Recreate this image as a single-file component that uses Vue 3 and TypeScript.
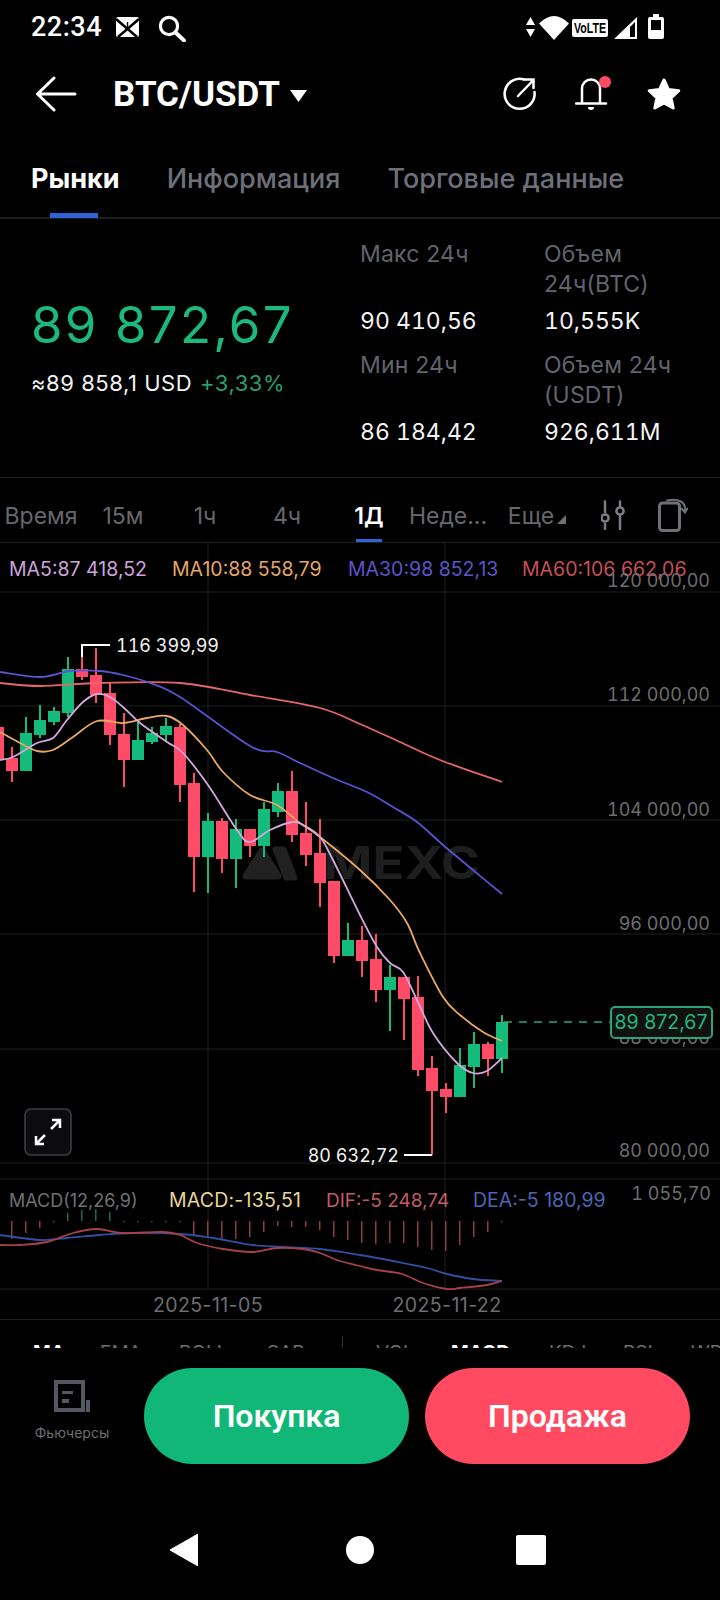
<template>
  <div class="screen">
    <div class="status-bar">
      <span class="clock">22:34</span>
      <svg class="st-tile" width="23" height="20" viewBox="0 0 23 20">
        <rect width="23" height="20" rx="2" fill="#fff" />
        <path d="M0 2 L21 20 M23 2 L2 20" stroke="#000" stroke-width="2.5" />
        <path d="M11.5 5v7m-3-3 3 3 3-3" stroke="#000" stroke-width="1.4" fill="none" />
      </svg>
      <svg class="st-search" width="28" height="27" viewBox="0 0 28 27">
        <circle cx="11" cy="11" r="8.6" fill="none" stroke="#fff" stroke-width="3.2" />
        <path d="M17.5 17.5 26 25.5" stroke="#fff" stroke-width="3.8" stroke-linecap="round" />
      </svg>
      <div class="st-right">
        <svg width="9" height="20" viewBox="0 0 9 20"><path d="M4.5 0 9 8H0ZM0 12h9l-4.500 8Z" fill="#fff" /></svg>
        <svg class="st-wifi" width="30" height="24" viewBox="0 0 30 24"><path d="M0 7.500Q15-7.500 30 7.500L15 24Z" fill="#fff" /></svg>
        <svg class="st-volte" width="36" height="18" viewBox="0 0 36 18">
          <rect width="36" height="18" rx="2" fill="#fff" />
          <text x="18" y="14" text-anchor="middle" textLength="32" lengthAdjust="spacingAndGlyphs" class="volte-text">VoLTE</text>
        </svg>
        <svg class="st-signal" width="23" height="22" viewBox="0 0 23 22">
          <path d="M23 0V22H0ZM21 5 16 10V20H21Z" fill="#fff" fill-rule="evenodd" />
        </svg>
        <svg class="st-battery" width="16" height="25" viewBox="0 0 16 25">
          <path d="M5 0h6v3h3a2 2 0 0 1 2 2v18a2 2 0 0 1-2 2H2a2 2 0 0 1-2-2V5a2 2 0 0 1 2-2h3Z" fill="#fff" />
          <rect x="3" y="6" width="10" height="10" fill="#000" />
        </svg>
      </div>
    </div>

    <header class="top-bar">
      <svg class="back" width="42" height="36" viewBox="0 0 42 36">
        <path d="M40 18H3M19 2 2.500 18 19 34" fill="none" stroke="#fff" stroke-width="3" stroke-linecap="round" stroke-linejoin="round" />
      </svg>
      <span class="pair">BTC/USDT</span>
      <svg class="caret" width="17" height="12" viewBox="0 0 17 12"><path d="M0 0H17L8.500 12Z" fill="#fff" /></svg>
      <div class="top-icons">
        <svg class="ic-share" width="34" height="34" viewBox="0 0 34 34">
          <path d="M21 2.500A15 15 0 1 0 31.500 15" fill="none" stroke="#fff" stroke-width="2.500" stroke-linecap="round" />
          <path d="M15 19 30 3.500M21.500 2.500H30.500V11" fill="none" stroke="#fff" stroke-width="2.500" stroke-linecap="round" />
        </svg>
        <svg class="ic-bell" width="36" height="36" viewBox="0 0 36 36">
          <path d="M7 27V12.500a9 9 0 0 1 18 0V27M1 27.500H31" fill="none" stroke="#fff" stroke-width="2.500" stroke-linecap="round" />
          <path d="M13 31h6a3 3 0 0 1-6 0Z" fill="#fff" />
          <circle cx="30" cy="6" r="6" fill="#ff4a62" />
        </svg>
        <svg class="ic-star" width="36" height="34" viewBox="0 0 36 34">
          <path d="M18 3 22.400 12.500 32.800 13.700 25.100 20.800 27.200 31 18 25.900 8.800 31 10.900 20.800 3.200 13.700 13.600 12.500Z" fill="#fff" stroke="#fff" stroke-width="3" stroke-linejoin="round" />
        </svg>
      </div>
    </header>

    <nav class="main-tabs">
      <span v-for="tab in mainTabs" :key="tab" class="main-tab" :class="{ active: tab === 'Рынки' }">{{ tab }}</span>
    </nav>

    <section class="stats">
      <div class="price-box">
        <div class="last-price">89 872,67</div>
        <div class="usd-price">≈89 858,1 USD <span class="change">+3,33%</span></div>
      </div>
      <div class="stats-grid">
        <div v-for="stat in stats" :key="stat.label" class="stat">
          <div class="stat-label">{{ stat.label }}</div>
          <div class="stat-value">{{ stat.value }}</div>
        </div>
      </div>
    </section>

    <div class="periods">
      <span v-for="p in periods" :key="p" class="period" :class="{ active: p === '1Д', week: p === 'Неде...' }">{{ p }}</span>
      <span class="period more">Еще<i class="more-mark"></i></span>
      <svg class="ic-sliders" width="24" height="30" viewBox="0 0 24 30">
        <g fill="none" stroke="#7b7c82" stroke-width="2.500" stroke-linecap="round">
          <path d="M4 1.500V12M4 24V29M19 1.500V7M19 16V29" />
          <circle cx="4" cy="18" r="3.600" />
          <circle cx="19" cy="11" r="3.600" />
        </g>
      </svg>
      <svg class="ic-rotate" width="30" height="34" viewBox="0 0 30 34">
        <rect x="1.500" y="5" width="20" height="27.500" rx="3" fill="none" stroke="#6f7075" stroke-width="3" />
        <path d="M9 2.500C20 .5 28 3 27 13M23.500 10.500 27 14.500 29.500 10.500" fill="none" stroke="#6f7075" stroke-width="2" stroke-linecap="round" />
      </svg>
    </div>

    <div class="chart-wrap">
      <svg class="chart" width="720" height="777" viewBox="0 543 720 777">
        <line v-for="y in gridRows" :key="y" x1="0" x2="720" :y1="y" :y2="y" class="grid" />
        <line v-for="x in [208, 445]" :key="x" :x1="x" :x2="x" y1="543" y2="1289" class="grid" />

        <!-- watermark -->
        <path d="M262 851 278 876H246Z" class="wm" stroke-width="7" stroke-linejoin="round" />
        <path d="M275 849H284L295 878H286Z" class="wm" stroke-width="5" stroke-linejoin="round" />
        <text x="323" y="879" textLength="157" lengthAdjust="spacingAndGlyphs" class="wm-text">MEXC</text>

        <g v-for="c in candles" :key="c[0]" :fill="c[5] === 'g' ? green : red">
          <rect :x="c[0] - 1" :y="c[3]" width="2" :height="c[4] - c[3]" />
          <rect :x="c[0] - 6" :y="c[1]" width="12" :height="c[2] - c[1]" />
        </g>

        <path :d="smooth(ma60)" class="ma" stroke="#e4666b" />
        <path :d="smooth(ma30)" class="ma" stroke="#5a52cf" />
        <path :d="smooth(ma10)" class="ma" stroke="#eaa862" />
        <path :d="smooth(ma5)" class="ma" stroke="#d5a8e0" />

        <text x="9" y="576" class="ma-lbl" fill="#cda4dc">MA5:87 418,52</text>
        <text x="172" y="576" class="ma-lbl" fill="#e5a765">MA10:88 558,79</text>
        <text x="348" y="576" class="ma-lbl" fill="#5c55c9">MA30:98 852,13</text>
        <text x="522" y="576" class="ma-lbl" fill="#c84f55">MA60:106 662,06</text>

        <text v-for="a in axis" :key="a.y" x="710" :y="a.y" text-anchor="end" class="lbl" fill="#6d6e70">{{ a.t }}</text>

        <path d="M82 657V645H110" fill="none" stroke="#fff" stroke-width="2" />
        <text x="116" y="652" class="lbl" fill="#f2f2f2">116 399,99</text>
        <path d="M404 1155H432" stroke="#fff" stroke-width="2" />
        <text x="399" y="1162" text-anchor="end" class="lbl" fill="#f2f2f2">80 632,72</text>

        <line x1="504" x2="610" y1="1022" y2="1022" stroke="#2aa57a" stroke-width="1.500" stroke-dasharray="8 7" />
        <rect x="611" y="1007" width="101" height="31" rx="4" fill="#111" stroke="#2aa57a" stroke-width="2" />
        <text x="661" y="1029" text-anchor="middle" class="ma-lbl" fill="#1fb87d">89 872,67</text>

        <text x="9" y="1207" class="macd-lbl" fill="#6f7073">MACD(12,26,9)</text>
        <text x="169" y="1207" class="ma-lbl wide" fill="#e9d59a">MACD:-135,51</text>
        <text x="326" y="1207" class="ma-lbl tight" fill="#c25a66">DIF:-5 248,74</text>
        <text x="473" y="1207" class="ma-lbl" fill="#4a66b4">DEA:-5 180,99</text>
        <text x="711" y="1200" text-anchor="end" class="lbl" fill="#6d6e70">1 055,70</text>

        <rect v-for="b in macdBars" :key="b[0]" :x="b[0] - 1" :y="b[1]" width="1.500" :height="b[2]" :fill="b[3]" />
        <path :d="smooth(dea)" class="macd-line" stroke="#2f4f9f" />
        <path :d="smooth(dif)" class="macd-line" stroke="#a8404a" />

        <text x="208" y="1312" text-anchor="middle" class="date-lbl" fill="#6d6e70">2025-11-05</text>
        <text x="447" y="1312" text-anchor="middle" class="date-lbl" fill="#6d6e70">2025-11-22</text>
      </svg>

      <button class="expand" type="button">
        <svg width="30" height="30" viewBox="0 0 30 30">
          <path d="M18 12 27 3M19 3H27V11M12 18 3 27M3 19V27H11" fill="none" stroke="#fff" stroke-width="2.500" />
        </svg>
      </button>
    </div>

    <div class="indicators">
      <template v-for="ind in indicators" :key="ind.name">
        <span class="ind" :class="{ active: ind.active }" :style="{ width: ind.width + 'px' }">{{ ind.name }}</span>
        <i v-if="ind.name === 'SAR'" class="ind-divider"></i>
      </template>
    </div>

    <div class="actions">
      <div class="futures">
        <svg width="36" height="32" viewBox="0 0 36 32">
          <rect x="2" y="2" width="27" height="28" fill="none" stroke="#555860" stroke-width="4" />
          <path d="M8 11H19V14H8ZM8 19H15V23H8ZM32 20H36V32H32Z" fill="#555860" />
        </svg>
        <span>Фьючерсы</span>
      </div>
      <button class="trade buy" type="button">Покупка</button>
      <button class="trade sell" type="button">Продажа</button>
    </div>

    <div class="nav-bar">
      <svg width="28" height="32" viewBox="0 0 28 32"><path d="M28 0V32L0 16Z" fill="#fff" stroke="#fff" stroke-linejoin="round" /></svg>
      <i class="nav-circle"></i>
      <i class="nav-square"></i>
    </div>
  </div>
</template>

<script setup lang="ts">
type Candle = [number, number, number, number, number, 'r' | 'g'];

const green = '#14bb7a';
const red = '#fd4b68';

const mainTabs = ['Рынки', 'Информация', 'Торговые данные'];
const periods = ['Время', '15м', '1ч', '4ч', '1Д', 'Неде...'];

const stats = [
  { label: 'Макс 24ч', value: '90 410,56' },
  { label: 'Объем 24ч(BTC)', value: '10,555K' },
  { label: 'Мин 24ч', value: '86 184,42' },
  { label: 'Объем 24ч (USDT)', value: '926,611M' },
];

const indicators = [
  { name: 'MA', width: 67, active: true },
  { name: 'EMA', width: 79 },
  { name: 'BOLL', width: 88 },
  { name: 'SAR', width: 75 },
  { name: 'VOL', width: 75 },
  { name: 'MACD', width: 98, active: true },
  { name: 'KDJ', width: 74 },
  { name: 'RSI', width: 68 },
  { name: 'WR', width: 40 },
];

const gridRows = [592, 706, 820, 934, 1049, 1163, 1179, 1289];

const axis = [
  { y: 587, t: '120 000,00' },
  { y: 701, t: '112 000,00' },
  { y: 816, t: '104 000,00' },
  { y: 930, t: '96 000,00' },
  { y: 1044, t: '88 000,00' },
  { y: 1157, t: '80 000,00' },
];

// x, body top, body bottom, wick top, wick bottom
const candles: Candle[] = [
  [-2, 727, 760, 712, 780, 'r'],
  [12, 758, 771, 747, 782, 'r'],
  [26, 733, 771, 717, 771, 'g'],
  [40, 720, 735, 705, 738, 'g'],
  [54, 711, 722, 707, 725, 'g'],
  [68, 669, 713, 657, 717, 'g'],
  [82, 669, 677, 645, 680, 'r'],
  [96, 675, 695, 648, 703, 'r'],
  [110, 693, 735, 683, 745, 'r'],
  [124, 734, 760, 713, 787, 'r'],
  [138, 740, 760, 720, 760, 'g'],
  [152, 733, 742, 727, 744, 'g'],
  [166, 726, 735, 718, 742, 'g'],
  [180, 727, 785, 724, 802, 'r'],
  [194, 783, 857, 773, 892, 'r'],
  [208, 821, 857, 813, 893, 'g'],
  [222, 821, 859, 818, 873, 'r'],
  [236, 829, 859, 819, 888, 'g'],
  [250, 829, 846, 829, 857, 'r'],
  [264, 809, 846, 802, 857, 'g'],
  [278, 791, 812, 783, 817, 'g'],
  [292, 791, 835, 771, 842, 'r'],
  [306, 833, 855, 802, 866, 'r'],
  [320, 853, 883, 819, 907, 'r'],
  [334, 881, 956, 881, 963, 'r'],
  [348, 940, 956, 923, 956, 'g'],
  [362, 940, 961, 926, 977, 'r'],
  [376, 959, 990, 934, 1002, 'r'],
  [390, 977, 990, 965, 1031, 'g'],
  [404, 977, 999, 977, 1040, 'r'],
  [418, 997, 1070, 976, 1076, 'r'],
  [432, 1068, 1091, 1056, 1155, 'r'],
  [446, 1089, 1097, 1083, 1113, 'r'],
  [460, 1065, 1097, 1048, 1097, 'g'],
  [474, 1044, 1067, 1032, 1088, 'g'],
  [488, 1044, 1059, 1042, 1076, 'r'],
  [502, 1022, 1059, 1015, 1073, 'g'],
];

const ma60 = '0,683 40,686 100,683 180,683 250,695 320,708 360,724 400,742 440,760 502,782';
const ma30 = '0,672 40,677 70,671 100,671 123,675 150,683 180,697 250,746 277,752 300,763 333,778 367,792 393,807 417,822 443,845 473,870 502,894';
const ma10 = '0,732 20,743 37,751 53,750 73,737 97,721 123,723 147,718 167,716 183,725 207,750 223,772 250,795 277,805 300,823 320,837 360,870 390,900 407,923 420,953 443,997 460,1015 483,1032 502,1041';
const ma5 = '0,760 13,757 37,743 53,738 67,720 83,702 97,694 110,697 123,707 140,723 167,742 183,753 208,785 237,830 250,842 270,830 292,822 303,825 320,837 333,860 360,915 377,947 390,963 403,972 417,1000 433,1033 457,1063 473,1073 487,1071 502,1058';

const dea = '0,1235 40,1240 67,1238 100,1235 133,1233 180,1234 213,1238 253,1245 283,1247 320,1249 360,1255 393,1261 427,1268 447,1274 473,1279 502,1281';
const dif = '0,1245 20,1245 47,1242 73,1233 97,1229 123,1233 163,1232 180,1235 197,1243 223,1249 253,1252 277,1248 303,1249 320,1253 337,1260 360,1266 377,1270 402,1274 423,1283 447,1289 460,1288 487,1285 502,1281';

const barEnds: [number, number][] = [
  [12, 1239], [26, 1233], [40, 1228], [194, 1235], [208, 1237], [222, 1239], [236, 1239], [250, 1237],
  [264, 1232], [278, 1226], [292, 1227], [306, 1227], [320, 1230], [334, 1237], [348, 1240], [362, 1243],
  [376, 1244], [390, 1243], [404, 1243], [418, 1247], [432, 1250], [446, 1251], [460, 1245], [474, 1237], [488, 1232],
];
const barTops: [number, number][] = [[68, 1213], [82, 1210], [96, 1209], [110, 1212]];
const dots = [54, 124, 138, 152, 166, 180, 502];

const macdBars: [number, number, number, string][] = [
  ...barEnds.map(([x, y]): [number, number, number, string] => [x, 1221, y - 1221, '#8f3b45']),
  ...barTops.map(([x, y]): [number, number, number, string] => [x, y, 1221 - y, '#1f6a4a']),
  ...dots.map((x): [number, number, number, string] => [x, 1221, 1.5, '#3f4a44']),
];

// catmull-rom through the sampled points, so the averages don't look kinked
const smooth = (pPoints: string) => {
  const vPts = pPoints.split(' ').map((p) => p.split(',').map(Number));
  let vPath = `M${vPts[0][0]} ${vPts[0][1]}`;
  for (let i = 0; i < vPts.length - 1; i++) {
    const p0 = vPts[Math.max(i - 1, 0)];
    const p1 = vPts[i];
    const p2 = vPts[i + 1];
    const p3 = vPts[Math.min(i + 2, vPts.length - 1)];
    const c1x = p1[0] + (p2[0] - p0[0]) / 6;
    const c1y = p1[1] + (p2[1] - p0[1]) / 6;
    const c2x = p2[0] - (p3[0] - p1[0]) / 6;
    const c2y = p2[1] - (p3[1] - p1[1]) / 6;
    vPath += `C${c1x.toFixed(1)} ${c1y.toFixed(1)} ${c2x.toFixed(1)} ${c2y.toFixed(1)} ${p2[0]} ${p2[1]}`;
  }
  return vPath;
};
</script>

<style scoped>
.screen {
  width: 720px;
  height: 1600px;
  overflow: hidden;
  background: #000;
  color: #fff;
  font-family: Inter, "Noto Sans", sans-serif;
}

.status-bar {
  display: flex;
  align-items: center;
  height: 54px;
  padding-left: 31px;
}
.clock {
  font: 500 27px Roboto, sans-serif;
  letter-spacing: 0.5px;
}
.st-tile {
  margin-left: 14px;
}
.st-search {
  margin-left: 19px;
  margin-top: 2px;
}
.st-right {
  display: flex;
  align-items: center;
  margin-left: auto;
  margin-right: 56px;
}
.st-wifi {
  margin-left: 4px;
  margin-top: 2px;
}
.st-volte {
  margin-left: 3px;
  margin-top: 2px;
}
.volte-text {
  font: 700 14px "Liberation Sans", sans-serif;
  fill: #000;
}
.st-signal {
  margin-left: 6px;
  margin-top: 2px;
}
.st-battery {
  margin-left: 11px;
  margin-bottom: 2px;
}

.top-bar {
  display: flex;
  align-items: center;
  height: 80px;
  padding-left: 35px;
}
.pair {
  margin-left: 36px;
  font: 700 35px Roboto, sans-serif;
}
.caret {
  margin-left: 10px;
  margin-top: 4px;
}
.top-icons {
  display: flex;
  align-items: center;
  margin-left: auto;
  margin-right: 38px;
}
.ic-bell {
  margin-left: 38px;
}
.ic-star {
  margin-left: 35px;
}

.main-tabs {
  display: flex;
  gap: 47px;
  height: 85px;
  padding-left: 31px;
  border-bottom: 2px solid #1b1c22;
  box-sizing: border-box;
  padding-top: 28px;
}
.main-tab {
  position: relative;
  font-size: 27px;
  line-height: 34px;
  font-weight: 500;
  color: #6e7079;
}
.main-tab.active {
  color: #fff;
  font-weight: 700;
}
.main-tab.active::after {
  content: "";
  position: absolute;
  left: 19px;
  width: 48px;
  height: 5px;
  bottom: -1px;
  background: #2f63d6;
}

.stats {
  display: flex;
  height: 259px;
  padding-left: 31px;
  border-bottom: 1px solid #1e1e20;
  box-sizing: border-box;
}
.price-box {
  width: 329px;
  padding-top: 76px;
}
.last-price {
  font-size: 51px;
  line-height: 60px;
  letter-spacing: 2.2px;
  color: #1cb97e;
}
.usd-price {
  margin-top: 13px;
  font-size: 22px;
  line-height: 30px;
  letter-spacing: 0.55px;
  color: #f2f2f2;
}
.change {
  margin-left: 1px;
  color: #2a9d6f;
}
.stats-grid {
  display: grid;
  grid-template-columns: 184px 165px;
  grid-auto-rows: 111px;
  padding-top: 21px;
}
.stat-label {
  height: 59px;
  font-size: 23px;
  line-height: 29.5px;
  letter-spacing: 0.2px;
  color: #62646d;
}
.stat-value {
  margin-top: 7px;
  font-size: 23px;
  line-height: 30px;
  font-variant-numeric: tabular-nums;
  color: #f4f4f4;
}

.periods {
  display: flex;
  align-items: center;
  height: 65px;
  border-bottom: 1px solid #1e1e20;
  box-sizing: border-box;
}
.period {
  position: relative;
  flex: none;
  align-self: stretch;
  box-sizing: border-box;
  width: 82px;
  padding-top: 21px;
  text-align: center;
  font-size: 23px;
  line-height: 34px;
  white-space: nowrap;
  color: #66686d;
}
.period.active {
  color: #fff;
  font-weight: 600;
}
.period.active::after {
  content: "";
  position: absolute;
  left: 28px;
  bottom: 0;
  width: 26px;
  height: 3px;
  background: #2f63d6;
}
.period.week {
  margin-left: -3px;
}
.period.more {
  width: 106px;
  margin-left: -5px;
}
.more-mark {
  display: inline-block;
  width: 0;
  height: 0;
  margin-left: 3px;
  border-left: 9px solid transparent;
  border-bottom: 9px solid #6f7075;
}
.ic-sliders {
  flex: none;
  margin-left: 11px;
  margin-top: 10px;
}
.ic-rotate {
  flex: none;
  margin-left: 33px;
  margin-top: 10px;
}

.chart-wrap {
  position: relative;
  height: 777px;
  border-bottom: 1px solid #1e1e20;
  box-sizing: border-box;
}
.chart {
  display: block;
}
.grid {
  stroke: #1e1e20;
  stroke-width: 1;
}
.wm {
  fill: #212121;
  stroke: #212121;
}
.wm-text {
  font: 700 45px Inter, sans-serif;
  fill: #1e1e1e;
}
.ma {
  fill: none;
  stroke-width: 1.8;
}
.macd-line {
  fill: none;
  stroke-width: 1.8;
}
.lbl,
.ma-lbl,
.date-lbl {
  font-family: Inter, sans-serif;
  font-size: 19.5px;
}
.lbl {
  font-size: 18px;
  font-variant-numeric: tabular-nums;
}
.date-lbl {
  letter-spacing: 0.4px;
}
.ma-lbl.wide {
  letter-spacing: 0.2px;
}
.ma-lbl.tight {
  font-size: 19px;
}
.macd-lbl {
  font-family: Inter, sans-serif;
  font-size: 18px;
}
.expand {
  position: absolute;
  left: 24px;
  top: 565px;
  display: flex;
  align-items: center;
  justify-content: center;
  width: 48px;
  height: 48px;
  padding: 0;
  background: #0c0c0e;
  border: 2px solid #2f3136;
  border-radius: 7px;
}

.indicators {
  display: flex;
  align-items: flex-start;
  height: 28px;
  overflow: hidden;
  padding-left: 33px;
  white-space: nowrap;
}
.ind {
  flex: none;
  margin-top: 21px;
  font-size: 19px;
  line-height: 24px;
  color: #6d6e70;
}
.ind.active {
  color: #fff;
  font-weight: 700;
}
.ind-divider {
  flex: none;
  width: 1px;
  height: 14px;
  margin: 16px 33px 0 0;
  background: #333;
}

.actions {
  display: flex;
  align-items: center;
  height: 152px;
  padding-bottom: 16px;
  box-sizing: border-box;
}
.futures {
  display: flex;
  flex-direction: column;
  align-items: center;
  flex: none;
  width: 144px;
  margin-bottom: 12px;
  font-size: 14px;
  color: #6d6e70;
}
.futures span {
  margin-top: 12px;
}
.trade {
  flex: none;
  width: 265px;
  height: 96px;
  padding: 0;
  border: 0;
  border-radius: 48px;
  color: #fff;
  font: 600 32px Roboto, sans-serif;
}
.buy {
  background: #10b777;
}
.sell {
  margin-left: 16px;
  background: #ff4a62;
}

.nav-bar {
  position: relative;
  height: 100px;
  display: flex;
  align-items: center;
  padding-left: 170px;
  padding-bottom: 1px;
  box-sizing: border-box;
}
.nav-circle {
  width: 28px;
  height: 28px;
  margin-left: 148px;
  background: #fff;
  border-radius: 50%;
}
.nav-square {
  width: 30px;
  height: 30px;
  margin-left: 142px;
  background: #fff;
  border-radius: 2px;
}
</style>

<style>
html,
body {
  background: #000;
}
</style>
